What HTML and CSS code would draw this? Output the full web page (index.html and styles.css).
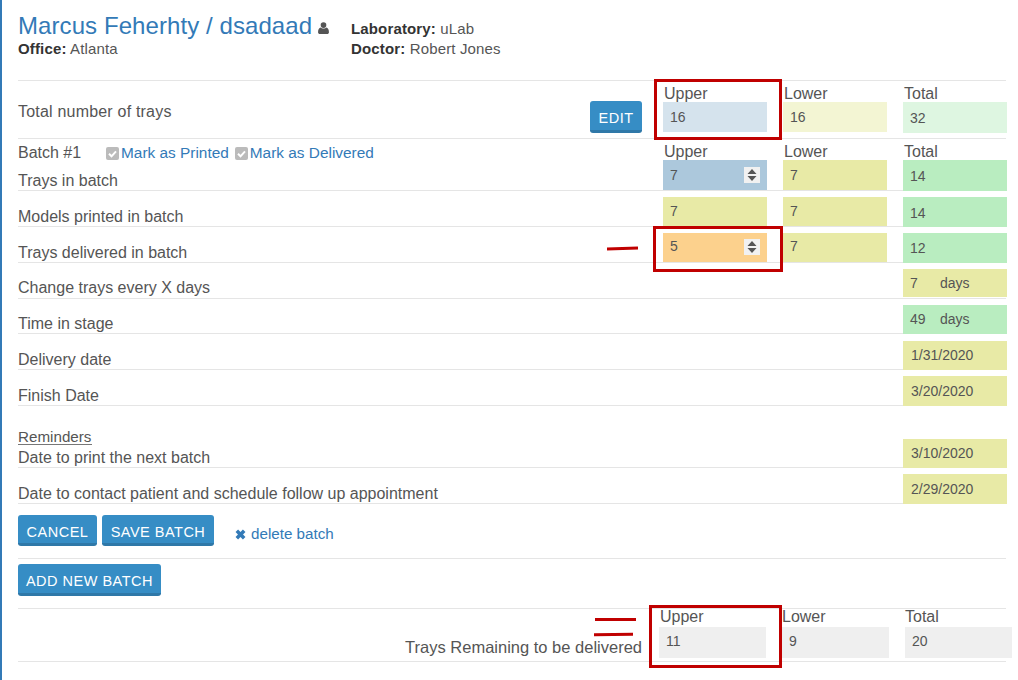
FILE: index.html
```html
<!DOCTYPE html>
<html lang="en">
<head>
<meta charset="utf-8">
<title>Marcus Feherhty / dsadaad</title>
<link rel="stylesheet" href="styles.css">
</head>
<body>
<main class="page">
  <header class="head">
    <div class="head-main">
      <h1 class="title"><a class="title-link">Marcus Feherhty / dsadaad</a>
        <svg class="user-icon" viewBox="0 0 10 11" width="11" height="12"><circle cx="5" cy="2.8" r="2.6"/><path d="M0 9.3C0 6.8 1 5.2 2.4 5 3 5.6 4 6 5 6s2-.4 2.6-1C9 5.2 10 6.800 10 9.300 10 10.300 9.300 11 8.300 11H1.700C.7 11 0 10.300 0 9.300z"/></svg>
      </h1>
      <p class="meta"><b>Office:</b> Atlanta</p>
    </div>
    <div class="head-side">
      <p class="meta"><b>Laboratory:</b> uLab</p>
      <p class="meta"><b>Doctor:</b> Robert Jones</p>
    </div>
  </header>

  <section class="row row-total">
    <div class="label-cell between">
      <span class="label label-total">Total number of trays</span>
      <button class="btn btn-edit">EDIT</button>
    </div>
    <div class="cell"><span class="cap">Upper</span><div class="field pale-blue">16</div></div>
    <div class="cell"><span class="cap">Lower</span><div class="field pale-yellow">16</div></div>
    <div class="cell"><span class="cap">Total</span><div class="field pale-green tall">32</div></div>
  </section>

  <section class="row row-batch">
    <div class="label-cell stack">
      <div class="batch-line">
        <span class="batch-name">Batch #1</span>
        <a class="check"><svg class="box" viewBox="0 0 13 13" width="13" height="13"><rect width="13" height="13" rx="2" fill="#bbb"/><path d="M3 6.800l2.500 2.500L10 4.300" fill="none" stroke="#fff" stroke-width="2"/></svg>Mark as Printed</a>
        <a class="check"><svg class="box" viewBox="0 0 13 13" width="13" height="13"><rect width="13" height="13" rx="2" fill="#bbb"/><path d="M3 6.800l2.500 2.500L10 4.300" fill="none" stroke="#fff" stroke-width="2"/></svg>Mark as Delivered</a>
      </div>
      <span class="label">Trays in batch</span>
    </div>
    <div class="cell"><span class="cap">Upper</span><div class="field blue spin-field">7<span class="spin"><svg viewBox="0 0 10 12" width="10" height="12"><path d="M5 0l4.500 5H.5zM5 12L.5 7h9z"/></svg></span></div></div>
    <div class="cell"><span class="cap">Lower</span><div class="field yellow">7</div></div>
    <div class="cell"><span class="cap">Total</span><div class="field green tall">14</div></div>
  </section>

  <section class="row h36 models">
    <span class="label">Models printed in batch</span>
    <div class="cell"><div class="field yellow">7</div></div>
    <div class="cell"><div class="field yellow">7</div></div>
    <div class="cell"><div class="field green tall">14</div></div>
  </section>

  <section class="row h36 delivered">
    <span class="label">Trays delivered in batch</span>
    <div class="cell"><div class="field orange spin-field">5<span class="spin"><svg viewBox="0 0 10 12" width="10" height="12"><path d="M5 0l4.500 5H.5zM5 12L.5 7h9z"/></svg></span></div></div>
    <div class="cell"><div class="field yellow">7</div></div>
    <div class="cell"><div class="field green tall">12</div></div>
  </section>

  <section class="row h36">
    <span class="label label-up">Change trays every X days</span>
    <div class="cell-last"><div class="field yellow days short"><span class="num">7</span>days</div></div>
  </section>
  <section class="row h35">
    <span class="label">Time in stage</span>
    <div class="cell-last"><div class="field green days"><span class="num">49</span>days</div></div>
  </section>
  <section class="row h36">
    <span class="label">Delivery date</span>
    <div class="cell-last"><div class="field yellow date">1/31/2020</div></div>
  </section>
  <section class="row h36">
    <span class="label">Finish Date</span>
    <div class="cell-last"><div class="field yellow date wide">3/20/2020</div></div>
  </section>

  <section class="row h62">
    <div class="label-cell stack">
      <span class="reminders">Reminders</span>
      <span class="label">Date to print the next batch</span>
    </div>
    <div class="cell-last"><div class="field yellow date">3/10/2020</div></div>
  </section>
  <section class="row h36">
    <span class="label">Date to contact patient and schedule follow up appointment</span>
    <div class="cell-last"><div class="field yellow date wide">2/29/2020</div></div>
  </section>

  <section class="actions">
    <button class="btn btn-cancel">CANCEL</button>
    <button class="btn btn-save">SAVE BATCH</button>
    <a class="delete"><svg class="x-icon" viewBox="1 1 10 10" width="11" height="11"><path d="M1.500 3.800L3.800 1.500 6 3.700l2.200-2.200 2.300 2.300L8.300 6l2.200 2.200-2.300 2.300L6 8.300l-2.200 2.200-2.300-2.300L3.700 6z"/></svg>delete batch</a>
  </section>
  <section class="add-row">
    <button class="btn btn-add">ADD NEW BATCH</button>
  </section>

  <section class="remain">
    <span class="remain-label">Trays Remaining to be delivered</span>
    <div class="cell"><span class="cap">Upper</span><div class="field grey">11</div></div>
    <div class="cell"><span class="cap cap-flush">Lower</span><div class="field grey">9</div></div>
    <div class="cell"><span class="cap cap-flush">Total</span><div class="field grey">20</div></div>
  </section>

  <div class="mark box-1"></div>
  <div class="mark box-2"></div>
  <div class="mark box-3"></div>
  <div class="dash dash-1"></div>
  <div class="dash dash-2"></div>
  <div class="dash dash-3"></div>
</main>
</body>
</html>
```
FILE: styles.css
```css
* { box-sizing: border-box; }
html, body { margin: 0; padding: 0; }
body {
  font-family: "Liberation Sans", Arial, sans-serif;
  font-size: 16px;
  color: #555;
  background: #fff;
  overflow: hidden;
}
.page {
  position: relative;
  width: 1018px;
  height: 680px;
  border-left: 2px solid #337ab7;
  padding-left: 16px;
}
.head {
  width: 988px;
  height: 81px;
  border-bottom: 1px solid #e5e5e5;
  display: flex;
  padding-top: 12px;
}
.head-main { width: 333px; }
.head-side { padding-top: 7px; }
.title {
  margin: 0;
  font-size: 24px;
  font-weight: 400;
  line-height: 28px;
  letter-spacing: .08px;
  color: #337ab7;
  height: 27px;
}
.user-icon { fill: #555; margin-left: -1px; }
.meta { margin: 0; font-size: 15px; line-height: 20px; color: #555; letter-spacing: .15px; }
.meta b { color: #333; }
.row {
  width: 988px;
  display: grid;
  grid-template-columns: 629px 104px 104px 104px;
  column-gap: 16px;
  align-items: end;
  border-bottom: 1px solid #e5e5e5;
}
.row-total { height: 58px; }
.row-batch { height: 52px; }
.h36 { height: 36px; }
.h35 { height: 35px; }
.h62 { height: 62px; }
.label { display: block; line-height: 18px; color: #555; }
.label-up { padding-bottom: 1px; }
.label-total { letter-spacing: .2px; margin-bottom: 17px; }
.label-cell { align-self: stretch; }
.between { display: flex; justify-content: space-between; align-items: flex-end; padding-right: 5px; }
.between .btn { margin-bottom: 5px; }
.stack { display: flex; flex-direction: column; justify-content: flex-end; }
.cell { display: flex; flex-direction: column; }
.cell-last { grid-column: 4; }
.cap { line-height: 20px; height: 18px; color: #555; margin-left: 1px; }
.cap-flush { margin-left: 0; }
.field {
  position: relative;
  height: 30px;
  line-height: 30px;
  padding-left: 7px;
  font-size: 14px;
  color: #555;
}
.tall { height: 31px; line-height: 32px; margin-bottom: -1px; }
.models .field { height: 29px; line-height: 29px; }
.models .tall { height: 30px; line-height: 32px; }
.delivered .field { height: 29px; line-height: 27px; }
.delivered .tall { height: 30px; line-height: 30px; }
.days, .date { height: 29px; line-height: 29px; margin-bottom: -1px; }
.date { padding-left: 8px; }
.short { height: 28px; line-height: 28px; margin-bottom: 1px; }
.wide { height: 30px; line-height: 30px; }
.pale-blue { background: #d5e3ed; margin-bottom: 6px; }
.pale-yellow { background: #f3f5d3; margin-bottom: 6px; }
.pale-green { background: #def6e1; margin-bottom: 5px; }
.blue { background: #acc8dc; }
.yellow { background: #e8eaa6; }
.green { background: #b9edc0; }
.orange { background: #fcd18d; }
.grey { background: #efefef; }
.spin {
  position: absolute;
  right: 7px;
  top: 7px;
  width: 16px;
  height: 16px;
  background: #f1f1f1;
  display: flex;
  align-items: center;
  justify-content: center;
}
.delivered .spin { top: 6px; }
.spin svg { fill: #555; }
.days { display: flex; }
.num { width: 30px; }
.batch-line { display: flex; align-items: center; line-height: 18px; height: 18px; margin-bottom: 10px; }
.batch-name { width: 88px; }
.check { color: #337ab7; font-size: 15.400px; margin-right: 6px; display: flex; align-items: center; }
.box { margin-right: 2px; }
.reminders { display: block; width: 74px; font-size: 15.200px; line-height: 15px; white-space: nowrap; border-bottom: 1px solid #777; margin-bottom: 4px; }
.btn {
  border: 0;
  border-radius: 3px;
  background: #368dc5;
  border-bottom: 3px solid #2f78a8;
  color: #fff;
  font-family: inherit;
  font-size: 14.500px;
  letter-spacing: .5px;
  padding: 5px 0 0;
  height: 32px;
}
.btn-edit { width: 52px; }
.btn-cancel { width: 79px; height: 31px; }
.btn-save { width: 112px; height: 31px; margin-left: 5px; }
.btn-add { width: 143px; }
.actions {
  width: 988px;
  height: 55px;
  border-bottom: 1px solid #e5e5e5;
  padding-top: 11px;
  display: flex;
  align-items: flex-start;
}
.delete { color: #337ab7; font-size: 15.200px; margin-left: 21px; line-height: 18px; margin-top: 10px; display: flex; align-items: center; }
.x-icon { fill: #337ab7; margin-right: 5px; }
.add-row { width: 988px; height: 50px; border-bottom: 1px solid #e5e5e5; padding-top: 5px; }
.remain {
  width: 988px;
  height: 53px;
  border-bottom: 1px solid #e5e5e5;
  display: grid;
  grid-template-columns: 625px 107px 107px 107px;
  column-gap: 16px;
  align-items: end;
}
.remain .field { height: 31px; margin-bottom: 4px; line-height: 28px; }
.remain .cap { margin-top: -1px; height: 19px; line-height: 18px; }
.remain-label { text-align: right; display: block; padding: 0 1px 6px 0; line-height: 18px; font-size: 16.500px; white-space: nowrap; }
.mark { position: absolute; border: 3px solid #c00000; pointer-events: none; }
.box-1 { left: 652px; top: 79px; width: 128px; height: 61px; }
.box-2 { left: 651px; top: 226px; width: 130px; height: 46px; }
.box-3 { left: 647px; top: 605px; width: 133px; height: 63px; }
.dash { position: absolute; height: 3px; background: #c00000; }
.dash-1 { left: 605px; top: 247px; width: 31px; transform: rotate(-1.500deg); }
.dash-2 { left: 593px; top: 618px; width: 41px; }
.dash-3 { left: 592px; top: 633px; width: 39px; transform: rotate(-1deg); }
```
